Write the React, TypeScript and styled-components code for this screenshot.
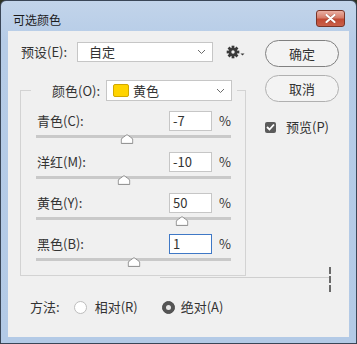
import React from 'react';
import styled, { createGlobalStyle } from 'styled-components';

const GlobalStyle = createGlobalStyle`
  html, body { margin: 0; padding: 0; background: #2e3324; }
  body { font-family: "Noto Sans CJK SC", "Noto Sans", sans-serif; color: #333; }
  * { box-sizing: border-box; }
`;

// --- Window chrome ---
const Window = styled.div`
  width: 357px;
  height: 344px;
  border: 1px solid #3a4657;
  border-radius: 6px 6px 0 0;
  background: linear-gradient(#c2d4ea, #b6cce7 40px, #b3cae6);
  padding: 0 7px 6px 7px;
  display: flex;
  flex-direction: column;
`;
const TitleBar = styled.div`
  height: 30px;
  display: flex;
  justify-content: space-between;
  align-items: flex-start;
`;
const Title = styled.div`
  margin: 10px 0 0 5px;
  font-size: 12px;
  line-height: 17px;
  color: #1b1b1b;
`;
const CloseButton = styled.div`
  width: 29px;
  height: 17px;
  margin: 9px 4px 0 0;
  border: 1px solid #7a3427;
  border-radius: 3px;
  background: linear-gradient(#eab0a3, #d77d6a 45%, #c24a33 55%, #c9604a);
  display: flex;
  align-items: center;
  justify-content: center;
`;
const Client = styled.div`
  position: relative;
  flex: 1;
  background: #f0f0f0;
  display: flex;
  flex-direction: column;
`;

// --- Layout ---
const Top = styled.div`
  display: flex;
  padding: 9px 0 0 12px;
`;
const LeftCol = styled.div`
  width: 226px;
  display: flex;
  flex-direction: column;
`;
const RightCol = styled.div`
  width: 74px;
  margin-left: 19px;
  display: flex;
  flex-direction: column;
`;
const PresetRow = styled.div`
  margin-top: 2px;
  height: 20px;
  display: flex;
  align-items: center;
`;
const Text = styled.span`
  font-size: 13px;
  line-height: 18px;
  white-space: nowrap;
`;
const PresetLabel = styled(Text)`
  width: 58px;
  padding-left: 1px;
`;
const Select = styled.div<{ $width: number; $height: number; $padLeft: number }>`
  width: ${p => p.$width}px;
  height: ${p => p.$height}px;
  border: 1px solid #c6c6c6;
  background: #fff;
  display: flex;
  align-items: center;
  padding: 0 6px 0 ${p => p.$padLeft}px;
`;
const SelectText = styled(Text)`
  flex: 1;
`;
const Gear = styled.div`
  margin-left: 13px;
  display: flex;
  align-items: center;
`;

// --- Group box ---
const GroupBox = styled.fieldset`
  margin: 18px 0 0 0;
  padding: 0 14px 0 15px;
  border: 1px solid #d3d3d3;
  width: 226px;
  min-width: 0;
`;
const Legend = styled.legend`
  margin-left: -5px;
  padding: 0 5px 0 21px;
  height: 21px;
  display: flex;
  align-items: center;
`;
const LegendLabel = styled(Text)`
  margin-right: 6px;
`;
const Swatch = styled.span`
  width: 16px;
  height: 13px;
  border-radius: 2px;
  background: #ffd400;
  border: 1px solid #d1a800;
  margin-right: 4px;
`;
const SliderRow = styled.div`
  height: 41px;
  &:first-of-type { margin-top: 10px; }
`;
const RowHead = styled.div`
  height: 20px;
  display: flex;
  align-items: center;
`;
const RowLabel = styled(Text)`
  flex: 1;
  padding-left: 1px;
`;
const ValueBox = styled.div<{ $active?: boolean }>`
  width: 43px;
  height: 20px;
  border: 1px solid ${p => (p.$active ? '#3f78c6' : '#c6c6c6')};
  background: #fff;
  padding-left: 3px;
  font-size: 13px;
  line-height: 18px;
`;
const Percent = styled(Text)`
  margin-left: 7px;
`;
const Track = styled.div`
  position: relative;
  margin-top: 4px;
  height: 3px;
  background: #c9c9c9;
`;
const Thumb = styled.svg`
  position: absolute;
  top: -1px;
  transform: translateX(-50%);
`;

// --- Right column ---
const PillButton = styled.div<{ $primary?: boolean }>`
  height: 27px;
  border-radius: 14px;
  border: 1px solid ${p => (p.$primary ? '#808080' : '#b0b0b0')};
  background: #f3f3f3;
  display: flex;
  align-items: center;
  justify-content: center;
  font-size: 13px;
  & + & { margin-top: 8px; }
`;
const PreviewRow = styled.div`
  margin-top: 15px;
  height: 20px;
  display: flex;
  align-items: center;
  gap: 10px;
`;
const CheckBox = styled.span`
  width: 11px;
  height: 11px;
  border-radius: 2px;
  background: #5b5b5b;
  display: flex;
  align-items: center;
  justify-content: center;
`;

// --- Method row ---
const MethodRow = styled.div`
  margin-top: 21px;
  padding-left: 22px;
  height: 20px;
  display: flex;
  align-items: center;
`;
const Radio = styled.span<{ $checked?: boolean; $gap: number }>`
  width: 13px;
  height: 13px;
  margin-left: ${p => p.$gap}px;
  border-radius: 50%;
  border: 1px solid ${p => (p.$checked ? '#4e4e4e' : '#bdbdbd')};
  background: ${p => (p.$checked ? '#555' : '#fff')};
  display: flex;
  align-items: center;
  justify-content: center;
  &::after {
    content: '';
    width: 5px;
    height: 5px;
    border-radius: 50%;
    background: #e8e8e8;
    display: ${p => (p.$checked ? 'block' : 'none')};
  }
`;
const RadioLabel = styled(Text)<{ $gap: number }>`
  margin-left: ${p => p.$gap}px;
`;

// leftover redraw marks seen in the screenshot
const GhostLine = styled.div`
  position: absolute;
  left: 152px;
  top: 246px;
  width: 170px;
  height: 1px;
  background: #cfcfcf;
`;
const GhostDash = styled.div`
  position: absolute;
  left: 321px;
  top: 236px;
  width: 2px;
  height: 25px;
  background: repeating-linear-gradient(#6a6a6a 0 7px, #f0f0f0 7px 9px);
`;

const Chevron = () => (
  <svg width="9" height="6" viewBox="0 0 9 6">
    <polyline points="1 1 4.5 4.5 8 1" fill="none" stroke="#6b6b6b" strokeWidth="1" />
  </svg>
);

const GearIcon = () => (
  <svg width="20" height="14" viewBox="0 0 20 14">
    <g transform="translate(7 7)">
      {[0, 45, 90, 135, 180, 225, 270, 315].map(a => (
        <rect key={a} x="-1.4" y="-6.3" width="2.8" height="3" fill="#3a3a3a" transform={`rotate(${a})`} />
      ))}
      <circle r="4.3" fill="#3a3a3a" />
      <circle r="1.7" fill="#f0f0f0" />
    </g>
    <polygon points="14.5,8.5 18.5,8.5 16.5,10.5" fill="#3a3a3a" />
  </svg>
);

const sliders = [
  { label: '青色(C):', value: '-7' },
  { label: '洋红(M):', value: '-10' },
  { label: '黄色(Y):', value: '50' },
  { label: '黑色(B):', value: '1', active: true },
];

export default function App() {
  return (
    <>
      <GlobalStyle />
      <Window>
        <TitleBar>
          <Title>可选颜色</Title>
          <CloseButton>
            <svg width="11" height="9" viewBox="0 0 11 9">
              <path d="M1.5 1 L9.5 8 M9.5 1 L1.5 8" stroke="#5a1c12" strokeWidth="3.2" strokeLinecap="round" opacity="0.35" />
              <path d="M1.5 1 L9.5 8 M9.5 1 L1.5 8" stroke="#fff" strokeWidth="2.2" strokeLinecap="round" />
            </svg>
          </CloseButton>
        </TitleBar>
        <Client>
          <Top>
            <LeftCol>
              <PresetRow>
                <PresetLabel>预设(E):</PresetLabel>
                <Select $width={138} $height={20} $padLeft={11}>
                  <SelectText>自定</SelectText>
                  <Chevron />
                </Select>
                <Gear><GearIcon /></Gear>
              </PresetRow>
              <GroupBox>
                <Legend>
                  <LegendLabel>颜色(O):</LegendLabel>
                  <Select $width={126} $height={21} $padLeft={6}>
                    <Swatch />
                    <SelectText>黄色</SelectText>
                    <Chevron />
                  </Select>
                </Legend>
                {sliders.map(s => {
                  const pct = (Number(s.value) + 100) / 2;
                  return (
                    <SliderRow key={s.label}>
                      <RowHead>
                        <RowLabel>{s.label}</RowLabel>
                        <ValueBox $active={s.active}>{s.value}</ValueBox>
                        <Percent>%</Percent>
                      </RowHead>
                      <Track>
                        <Thumb width="13" height="10" viewBox="0 0 13 10" style={{ left: `${pct}%` }}>
                          <path d="M6.5 0.8 Q7.2 0.8 12.3 5 L12.3 9.4 L0.7 9.4 L0.7 5 Q5.8 0.8 6.5 0.8 Z" fill="#fff" stroke="#8a8a8a" strokeWidth="1" />
                        </Thumb>
                      </Track>
                    </SliderRow>
                  );
                })}
              </GroupBox>
            </LeftCol>
            <RightCol>
              <PillButton $primary>确定</PillButton>
              <PillButton>取消</PillButton>
              <PreviewRow>
                <CheckBox>
                  <svg width="9" height="8" viewBox="0 0 9 8">
                    <polyline points="1 4 3.5 6.5 8 1.5" fill="none" stroke="#fff" strokeWidth="1.8" />
                  </svg>
                </CheckBox>
                <Text>预览(P)</Text>
              </PreviewRow>
            </RightCol>
          </Top>
          <MethodRow>
            <Text>方法:</Text>
            <Radio $gap={14} />
            <RadioLabel $gap={8}>相对(R)</RadioLabel>
            <Radio $gap={24} $checked />
            <RadioLabel $gap={6}>绝对(A)</RadioLabel>
          </MethodRow>
          <GhostLine />
          <GhostDash />
        </Client>
      </Window>
    </>
  );
}
